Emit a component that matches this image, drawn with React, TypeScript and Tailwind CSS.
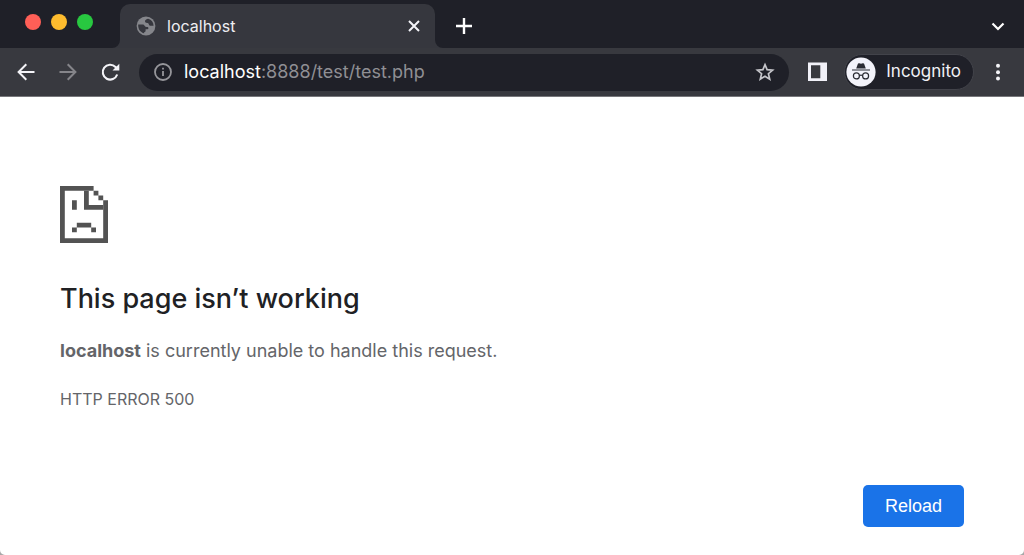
import type { ReactNode } from 'react';

function IconButton({ label, className = '', children }: { label: string; className?: string; children: ReactNode }) {
  return (
    <button type="button" aria-label={label} className={`flex shrink-0 items-center justify-center ${className}`}>
      {children}
    </button>
  );
}

function GlobeIcon() {
  return (
    <svg viewBox="0 0 20 20" className="size-5 shrink-0" aria-hidden="true">
      <circle cx="10" cy="10" r="9.4" fill="#85868b" />
      <path
        d="M2.200 8.500h4.300c1.300 0 1.900.6 2.300 1.500.3.700.900 1 1.800 1h.6c.8 0 1.200.5 1.200 1.200 0 .8-.6 1.100-1.500 1.100H9.600v1.500c0 .8-.6 1.200-1.300 1.300l-.2 1.200C4.700 16.500 2.400 13.600 2.200 10Z"
        fill="#36373e"
      />
      <path
        d="M12.200 2.700c-1.700.4-3.200 1.100-3.200 2.600 0 1.300.9 1.700 2.100 1.700 1 0 1.500.4 1.700 1.200.3 1 1 1.500 2.100 1.500h2.700a7.800 7.800 0 0 0-5.400-7Z"
        fill="#36373e"
      />
    </svg>
  );
}

function TabStrip() {
  return (
    <header className="flex h-12 items-end bg-[#1f2028]">
      <div className="flex w-[120px] shrink-0 gap-[10px] self-start pt-[14px] pl-[25px]">
        <button type="button" aria-label="Close window" className="size-4 rounded-full bg-[#ff5f57]" />
        <button type="button" aria-label="Minimize window" className="size-4 rounded-full bg-[#febc2e]" />
        <button type="button" aria-label="Zoom window" className="size-4 rounded-full bg-[#28c840]" />
      </div>
      <div className="relative flex h-11 w-[315px] items-center rounded-t-[10px] bg-[#36373e] pr-3 pl-4">
        <svg viewBox="0 0 8 8" className="absolute bottom-0 -left-2 size-2" aria-hidden="true">
          <path d="M8 0v8H0a8 8 0 0 0 8-8Z" fill="#36373e" />
        </svg>
        <svg viewBox="0 0 8 8" className="absolute -right-2 bottom-0 size-2" aria-hidden="true">
          <path d="M0 0v8h8a8 8 0 0 1-8-8Z" fill="#36373e" />
        </svg>
        <GlobeIcon />
        <span className="ml-[11px] flex-1 text-base text-[#eeeef2]">localhost</span>
        <IconButton label="Close tab" className="size-[18px]">
          <svg viewBox="0 0 18 18" className="size-[18px]" fill="none" stroke="#f4f4f8" strokeWidth="2">
            <path d="m4 4 10 10M14 4 4 14" />
          </svg>
        </IconButton>
      </div>
      <IconButton label="New tab" className="ml-[19px] h-11 w-5">
        <svg viewBox="0 0 20 20" className="size-5" fill="none" stroke="#fff" strokeWidth="2.4">
          <path d="M10 2v16M2 10h16" />
        </svg>
      </IconButton>
      <IconButton label="Search tabs" className="mr-4 ml-auto h-11 w-5">
        <svg viewBox="0 0 20 20" className="size-5" fill="none" stroke="#fff" strokeWidth="2.2">
          <path d="m4.500 7.500 5.500 5.500 5.500-5.500" />
        </svg>
      </IconButton>
    </header>
  );
}

function IncognitoIcon() {
  return (
    <svg viewBox="0 0 30 30" className="size-[30px] shrink-0" aria-hidden="true">
      <circle cx="15" cy="15" r="14.6" fill="#f3f3fa" />
      <path
        d="M10.200 11.600 11.900 6.800c.2-.6.7-.8 1.300-.6l1.800.5 1.800-.5c.6-.2 1.100 0 1.300.6l1.700 4.800ZM6 12.400h18v1.200H6Z"
        fill="#2b2c33"
      />
      <g fill="none" stroke="#2b2c33" strokeWidth="1.2">
        <circle cx="10.400" cy="18.900" r="3" />
        <circle cx="19.600" cy="18.900" r="3" />
        <path d="M13.400 18.600c1-.7 2.200-.7 3.200 0" />
      </g>
    </svg>
  );
}

function Toolbar() {
  return (
    <nav className="flex h-[49px] items-center border-b border-[#77777b] bg-[#38393f] px-4">
      <div className="flex gap-[22px]">
        <IconButton label="Back" className="size-5">
          <svg viewBox="0 0 20 20" className="size-5" fill="none" stroke="#f4f4f8" strokeWidth="2">
            <path d="M18.500 10H3M10.300 2.300 2.600 10l7.700 7.700" />
          </svg>
        </IconButton>
        <IconButton label="Forward" className="size-5">
          <svg viewBox="0 0 20 20" className="size-5" fill="none" stroke="#85858a" strokeWidth="2">
            <path d="M1.500 10H17M9.700 2.300l7.700 7.700-7.700 7.700" />
          </svg>
        </IconButton>
        <IconButton label="Reload page" className="size-5">
          <svg viewBox="0 0 20 20" className="size-5" fill="none" stroke="#f4f4f8" strokeWidth="2.1">
            <path d="M17.200 12.500A7.400 7.400 0 1 1 15.500 5l1.800 1.800" />
            <path d="M19.300 1.700V8.500h-6.800Z" fill="#f4f4f8" stroke="none" />
          </svg>
        </IconButton>
      </div>
      <div className="ml-[19px] flex h-[37px] flex-1 items-center rounded-full bg-[#1f2028] px-[14px]">
        <svg viewBox="0 0 20 20" className="size-5 shrink-0" aria-hidden="true">
          <circle cx="10" cy="10" r="8" fill="none" stroke="#96969b" strokeWidth="1.8" />
          <path d="M9.100 9h1.800v5H9.100ZM9.100 5.700h1.800v1.900H9.100Z" fill="#96969b" />
        </svg>
        <p className="ml-[11px] flex-1 text-lg text-[#8f8f94]">
          <span className="text-white">localhost</span>:8888/test/test.php
        </p>
        <IconButton label="Bookmark this tab" className="size-5">
          <svg viewBox="0 0 20 20" className="size-5" fill="none" stroke="#c5c5ca" strokeWidth="1.7">
            <path d="m10 2.600 2.100 5 5.500.5-4.200 3.600 1.300 5.400L10 14.200l-4.700 2.900 1.300-5.400-4.200-3.600 5.500-.5Z" />
          </svg>
        </IconButton>
      </div>
      <IconButton label="Side panel" className="ml-[19px] size-5">
        <svg viewBox="0 0 20 20" className="size-5">
          <path d="M0 .500h19V19H0ZM3 3.200v13.100h9.300V3.200Z" fill="#f1f1f8" fillRule="evenodd" />
        </svg>
      </IconButton>
      <div className="ml-4 flex h-9 items-center rounded-full border border-[#42434a] bg-[#1f2028] pr-3 pl-px">
        <IncognitoIcon />
        <span className="ml-[10px] text-[17px] text-[#f1f1f5]">Incognito</span>
      </div>
      <IconButton label="Menu" className="ml-[14px] size-5">
        <svg viewBox="0 0 20 20" className="size-5" fill="#f4f4f8">
          <circle cx="10" cy="3.800" r="2" />
          <circle cx="10" cy="10.200" r="2" />
          <circle cx="10" cy="16.600" r="2" />
        </svg>
      </IconButton>
    </nav>
  );
}

function SadPageIcon() {
  return (
    <svg viewBox="0 0 20 24" className="h-[57px] w-12" fill="#535353" preserveAspectRatio="none" aria-hidden="true">
      <path d="M0 0h14v2H2v20h16V6h2v18H0Z" />
      <path d="M10 2h2v6h6v2h-8ZM14 2h2v2h-2ZM16 4h2v2h-2Z" />
      <path d="M5 6h2v4H5ZM7 15.500h6v2H7ZM5 17.500h2v2H5ZM13 17.500h2v2h-2Z" />
    </svg>
  );
}

export default function App() {
  return (
    <div className="flex min-h-screen flex-col bg-white font-['Inter','Liberation_Sans',sans-serif]">
      <TabStrip />
      <Toolbar />
      <main className="relative flex flex-1 flex-col px-[60px] pt-[89px] pb-7">
        <SadPageIcon />
        <h1 className="mt-9 text-[27px] leading-10 font-medium text-[#202124]">This page isn’t working</h1>
        <p className="mt-5 text-lg leading-6 text-[#646569]">
          <strong className="font-bold">localhost</strong> is currently unable to handle this request.
        </p>
        <p className="mt-6 text-base leading-6 text-[#646569]">HTTP ERROR 500</p>
        <button
          type="button"
          className="mt-auto h-[42px] self-end rounded-[5px] bg-[#1a73e8] px-[22px] font-['Liberation_Sans',Arial,sans-serif] text-lg text-white"
        >
          Reload
        </button>
        <svg viewBox="0 0 6 6" className="absolute bottom-0 left-0 size-[5px]" aria-hidden="true">
          <path d="M0 0a6 6 0 0 0 6 6H0Z" fill="#a8a8a8" />
        </svg>
        <svg viewBox="0 0 6 6" className="absolute right-0 bottom-0 size-[5px]" aria-hidden="true">
          <path d="M6 0a6 6 0 0 1-6 6h6Z" fill="#a8a8a8" />
        </svg>
      </main>
    </div>
  );
}
